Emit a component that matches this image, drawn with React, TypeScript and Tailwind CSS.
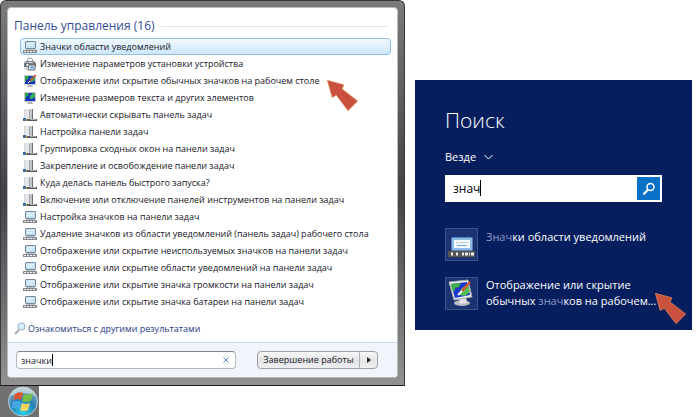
import { useState } from 'react';

type IconKind = 'tray' | 'printer' | 'desktop' | 'display' | 'taskbar';

interface ResultItem {
  icon: IconKind;
  label: string;
  arrow?: boolean;
}

const results: ResultItem[] = [
  { icon: 'tray', label: 'Значки области уведомлений' },
  { icon: 'printer', label: 'Изменение параметров установки устройства' },
  { icon: 'desktop', label: 'Отображение или скрытие обычных значков на рабочем столе', arrow: true },
  { icon: 'display', label: 'Изменение размеров текста и других элементов' },
  { icon: 'taskbar', label: 'Автоматически скрывать панель задач' },
  { icon: 'taskbar', label: 'Настройка панели задач' },
  { icon: 'taskbar', label: 'Группировка сходных окон на панели задач' },
  { icon: 'taskbar', label: 'Закрепление и освобождение панели задач' },
  { icon: 'taskbar', label: 'Куда делась панель быстрого запуска?' },
  { icon: 'taskbar', label: 'Включение или отключение панелей инструментов на панели задач' },
  { icon: 'tray', label: 'Настройка значков на панели задач' },
  { icon: 'tray', label: 'Удаление значков из области уведомлений (панель задач) рабочего стола' },
  { icon: 'tray', label: 'Отображение или скрытие неиспользуемых значков на панели задач' },
  { icon: 'tray', label: 'Отображение или скрытие области уведомлений на панели задач' },
  { icon: 'tray', label: 'Отображение или скрытие значка громкости на панели задач' },
  { icon: 'tray', label: 'Отображение или скрытие значка батареи на панели задач' },
];

function ResultIcon({ kind }: { kind: IconKind }) {
  return (
    <svg viewBox="0 0 14 14" className="h-3.5 w-3.5 shrink-0" aria-hidden="true">
      {kind === 'tray' && (
        <>
          <rect x="2.5" y="1.5" width="10" height="7" rx="0.5" fill="#c6e4f7" stroke="#7b8794" />
          <path d="M4 3.5h7M4 5.5h5" stroke="#e8f6ff" />
          <path d="M3 9.5h9" stroke="#b9c1c9" />
          <rect x="0" y="10" width="14" height="3" rx="0.5" fill="#85898e" />
          <path d="M1 11.5h12" stroke="#f2f2f2" strokeDasharray="2 1" />
        </>
      )}
      {kind === 'printer' && (
        <>
          <path d="M4.5 5V3a2.5 2 0 0 1 5 0v2" fill="none" stroke="#8a9097" />
          <path d="M1 6l2-2h8l2 2v4H1z" fill="#777d84" />
          <path d="M3 5.5h7" stroke="#d9dde1" />
          <circle cx="4.5" cy="8" r="2" fill="#dfe4e8" stroke="#4c5259" />
          <path d="M6 8h6v5H5z" fill="#e8eef4" stroke="#656c73" />
          <path d="M7.5 9.5h3v2h-3z" fill="#4b8ecb" />
          <path d="M1 10.5l3 2" stroke="#a4abb1" />
        </>
      )}
      {(kind === 'desktop' || kind === 'display') && (
        <>
          <rect x="1" y="1" width="12" height="10" fill="#c3ccd5" />
          <rect x="2" y="2" width="10" height="8" fill="#1634bd" />
          <path d="M2 2h4L5 5 3 6v2H2z" fill="#2ba44a" />
          <path d="M7 5l3-3h2v4L9 8H7z" fill="#37ae5a" />
          <path d="M5 11h4l1 2H4z" fill="#b3b7bb" />
          {kind === 'desktop' && (
            <>
              <path d="M7 7l6-6" stroke="#d9452d" strokeWidth="1.5" />
              <path d="M5 9l2-2" stroke="#fff" />
            </>
          )}
        </>
      )}
      {kind === 'taskbar' && (
        <>
          <rect x="1" y="1" width="5" height="10" fill="#e4e6e8" />
          <path d="M1.5 1v9" stroke="#d3d6d9" />
          <rect x="6" y="1" width="4" height="10" fill="#c3c6c9" />
          <path d="M9.5 1v10" stroke="#6b7076" />
          <path d="M6.5 2v8" stroke="#a3a7ab" />
          <rect x="1" y="11" width="13" height="2" fill="#565b60" />
          <rect x="0" y="10" width="3" height="3" fill="#3a6ea0" />
          <rect x="3" y="11" width="1" height="2" fill="#e6a52c" />
          <path d="M7 11.5h6" stroke="#a5aaae" />
        </>
      )}
    </svg>
  );
}

function PointerArrow({ className }: { className: string }) {
  return (
    <svg viewBox="0 0 90 90" className={`pointer-events-none absolute h-[31px] w-[31px] ${className}`} aria-hidden="true">
      <path d="M1 1 49 14 44 26 89 61 61 89 27 44 15 51z" fill="#c9513e" stroke="#e0925e" strokeWidth="2" />
    </svg>
  );
}

function StartOrb() {
  return (
    <svg viewBox="0 0 32 31" className="h-[31px] w-8" aria-hidden="true">
      <defs>
        <radialGradient id="orb" cx="50%" cy="85%" r="85%">
          <stop offset="0" stopColor="#29d2ec" />
          <stop offset="0.5" stopColor="#2480b7" />
          <stop offset="1" stopColor="#a9b9bf" />
        </radialGradient>
      </defs>
      <circle cx="16" cy="15.5" r="14.5" fill="url(#orb)" stroke="#b8ced4" />
      <path d="M3 10a14 14 0 0 1 26 0q-13-6-26 0z" fill="#e6eef0" opacity="0.55" />
      <path d="M8 8q4-3 8-1l-2 7q-4-2-8 0z" fill="#dc5737" />
      <path d="M17 8q4 2 9-1l-2 8q-5 2-9 0z" fill="#77bd43" />
      <path d="M6 16q4-2 8 0l-2 7q-4-2-8 0z" fill="#45a8e5" />
      <path d="M15 17q4 2 8 0l-2 7q-4 2-8 0z" fill="#f8d45f" />
    </svg>
  );
}

function StartMenu() {
  const [query, setQuery] = useState('значки');

  return (
    <div>
      <section className="rounded-t-md border border-[#38383a] border-b-[#1d1820] bg-linear-to-b from-[#7b7b7b] via-[#414345] to-[#929292] p-1.5 pb-[7px]">
        <div className="overflow-hidden rounded border border-[#b9bcc0] bg-white text-[9px] leading-[17px] font-medium text-[#171727]">
          <div className="px-1.5 pt-2">
            <h2 className="mb-0.5 flex items-center gap-1.5 text-[12px] leading-5 font-normal text-[#334c94]">
              <span className="whitespace-nowrap">Панель управления (16)</span>
              <span className="mr-1 h-px flex-1 bg-[#dfe3ee]" />
            </h2>
            <ul className="pl-1.5">
              {results.map((item, index) => (
                <li key={item.label}>
                  <button
                    type="button"
                    className={
                      index === 0
                        ? 'flex h-[17px] w-full items-center gap-0.5 rounded-sm bg-linear-to-b from-[#f2f9fe] to-[#cce6fa] pl-[3px] text-left whitespace-nowrap outline outline-[#91bfe6] -outline-offset-1'
                        : 'flex h-[17px] w-full items-center gap-0.5 pl-[3px] text-left whitespace-nowrap'
                    }
                  >
                    <ResultIcon kind={item.icon} />
                    <span className="relative pl-px">
                      {item.label}
                      {item.arrow && <PointerArrow className="top-2 left-full ml-2" />}
                    </span>
                  </button>
                </li>
              ))}
            </ul>
            <a href="#results" className="mt-1.5 flex h-6 items-center gap-0.5 text-[#263b86]">
              <svg viewBox="0 0 12 13" className="h-[13px] w-3" aria-hidden="true">
                <path d="M1 12l4-4" stroke="#a4a8b0" strokeWidth="2" />
                <circle cx="7.5" cy="4.5" r="3.5" fill="#d8efff" stroke="#8fa9c3" />
              </svg>
              Ознакомиться с другими результатами
            </a>
          </div>
          <div className="mt-0.5 flex items-center justify-between border-t border-[#cad8ed] bg-[#f0f5fc] py-2 pr-[19px] pl-2">
            <div className="relative w-[220px]">
              <input
                aria-label="Поиск программ"
                value={query}
                onChange={(e) => setQuery(e.target.value)}
                className="block h-[18px] w-full rounded-sm border border-[#b4b9bf] border-t-[#7f8388] bg-white pr-5 pl-1"
              />
              <span className="pointer-events-none absolute top-[3px] left-[36px] h-3 w-px bg-black" />
              <button
                type="button"
                aria-label="Очистить"
                onClick={() => setQuery('')}
                className="absolute top-0 right-1 flex h-[18px] w-3 items-center justify-center"
              >
                <svg viewBox="0 0 6 6" className="h-1.5 w-1.5" aria-hidden="true">
                  <path d="M.5.5l5 5M5.5.5l-5 5" stroke="#5689bd" />
                </svg>
              </button>
            </div>
            <div className="flex h-[18px] rounded-sm border border-[#9da0a4] bg-linear-to-b from-[#f8f8f8] via-[#e4e5e7] to-[#eeeff1]">
              <button type="button" className="w-[102px] border-r border-[#afb2b5] leading-4 whitespace-nowrap">
                Завершение работы
              </button>
              <button type="button" aria-label="Другие действия" className="flex w-[17px] items-center justify-center">
                <svg viewBox="0 0 4 6" className="h-1.5 w-1" aria-hidden="true">
                  <path d="M0 0l4 3-4 3z" fill="#222" />
                </svg>
              </button>
            </div>
          </div>
        </div>
      </section>
      <button
        type="button"
        aria-label="Пуск"
        className="flex h-[31px] w-[39px] items-center justify-end bg-[#717171]"
      >
        <StartOrb />
      </button>
    </div>
  );
}

function SearchPanel() {
  const [query, setQuery] = useState('знач');

  return (
    <section className="mt-20 bg-[#061e5e] px-[30px] pt-6 pb-5 text-[11px] leading-4 text-white">
      <h1 className="text-[21px] leading-8 font-light">Поиск</h1>
      <button type="button" className="mt-[11px] flex items-center gap-2 leading-5">
        Везде
        <svg viewBox="0 0 9 6" className="h-1.5 w-[9px]" aria-hidden="true">
          <path d="M.5 1l4 4 4-4" fill="none" stroke="white" />
        </svg>
      </button>
      <div className="relative mt-2 flex h-[27px] bg-white p-0.5">
        <input
          aria-label="Поиск"
          value={query}
          onChange={(e) => setQuery(e.target.value)}
          className="min-w-0 flex-1 pl-1.5 text-[12px] text-black"
        />
        <span className="pointer-events-none absolute top-[5px] left-[35px] h-4 w-px bg-black" />
        <button type="button" aria-label="Найти" className="flex w-[23px] items-center justify-center bg-[#0870c6]">
          <svg viewBox="0 0 14 14" className="h-3.5 w-3.5" aria-hidden="true">
            <circle cx="8.5" cy="5" r="3.5" fill="none" stroke="white" strokeWidth="1.5" />
            <path d="M6 7.5l-4.5 5" stroke="white" strokeWidth="2" />
          </svg>
        </button>
      </div>
      <ul className="mt-[26px] flex flex-col gap-4">
        <li>
          <button type="button" className="flex w-full gap-2 text-left">
            <svg viewBox="0 0 33 33" className="h-[33px] w-[33px] shrink-0" aria-hidden="true">
              <rect x="0.5" y="0.5" width="32" height="32" fill="#1b3471" stroke="#3b5289" />
              <path d="M9 8h1M16 8h1M23 8h1" stroke="#2944c5" strokeWidth="2" />
              <rect x="6.5" y="9.5" width="21" height="13" rx="1" fill="#8dbbe7" stroke="#577dac" />
              <rect x="9" y="12" width="16" height="8" fill="#f3faff" />
              <path d="M11 14.5h12" stroke="#bfcbd6" />
              <path d="M12 17.5h10" stroke="#6ca6d6" />
              <rect x="3" y="23" width="27" height="6" fill="#555553" />
              <path d="M6 26h2M11 26h2M17 26h2M20 26h3M24 26h1M26 26h3" stroke="#eee" strokeWidth="3" />
            </svg>
            <span className="mt-px whitespace-nowrap">
              <span className="text-[#8d9cc4]">Знач</span>ки области уведомлений
            </span>
          </button>
        </li>
        <li className="relative">
          <button type="button" className="flex w-full gap-2 text-left">
            <svg viewBox="0 0 33 33" className="h-[33px] w-[33px] shrink-0" aria-hidden="true">
              <rect x="0.5" y="0.5" width="32" height="32" fill="#1b3471" stroke="#3b5289" />
              <ellipse cx="17" cy="26" rx="8" ry="3" fill="#bbc0c4" />
              <path d="M14 21l7-1 1 6-7 1z" fill="#e0e2e4" />
              <path d="M4 5l19-2 4 17-18 3z" fill="#edf0f1" stroke="#9da5ad" />
              <path d="M6 7l16-2 3 13-15 3z" fill="#1b35cf" />
              <path d="M6 7l10-1-2 4-4 1v3l-3-1z" fill="#42ae49" />
              <path d="M16 12l7-6 2 9-5 4-6-1z" fill="#55bd54" />
              <path d="M17 14l8-9" stroke="#e14c35" strokeWidth="2" />
              <path d="M13 18l4-4" stroke="#f5f5f5" strokeWidth="2" />
            </svg>
            <span className="whitespace-nowrap">
              Отображение или скрытие
              <br />
              обычных <span className="text-[#8d9cc4]">знач</span>ков на рабочем...
            </span>
          </button>
          <PointerArrow className="top-4 -right-6" />
        </li>
      </ul>
    </section>
  );
}

export default function App() {
  return (
    <main className="grid grid-cols-[minmax(0,405fr)_minmax(0,277fr)] items-start gap-2.5 bg-white pr-2 font-['Open_Sans','Noto_Sans',sans-serif]">
      <StartMenu />
      <SearchPanel />
    </main>
  );
}
